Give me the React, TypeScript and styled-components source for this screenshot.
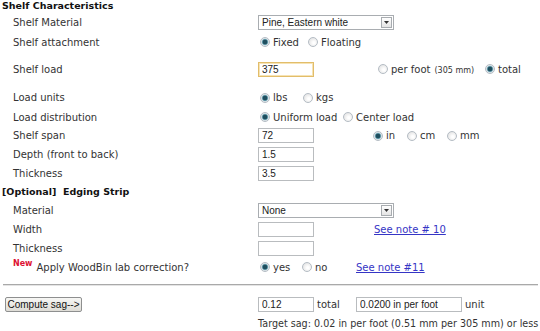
import React from 'react';
import styled, { createGlobalStyle } from 'styled-components';

const GlobalStyle = createGlobalStyle`
  html, body {
    margin: 0;
    padding: 0;
    background: #ffffff;
  }

  body {
    font-family: "DejaVu Sans", Verdana, sans-serif;
    font-size: 10px;
    color: #333333;
  }
`;

const Form = styled.div`
  width: 540px;
  display: flex;
  flex-direction: column;
`;

const Row = styled.div<{ $h: number }>`
  display: flex;
  align-items: center;
  height: ${(p) => p.$h}px;
`;

const SectionTitle = styled.div`
  padding-left: 2px;
  font-weight: bold;
  font-size: 9.5px;
  color: #111111;
  white-space: pre;
`;

const Label = styled.div`
  width: 258px;
  flex: none;
  box-sizing: border-box;
  padding-left: 13px;
  white-space: nowrap;
`;

const ButtonCell = styled.div`
  width: 258px;
  flex: none;
  box-sizing: border-box;
  padding-left: 5px;
  display: flex;
  align-items: center;
`;

const Controls = styled.div`
  display: flex;
  align-items: center;
  flex: 1;
  white-space: nowrap;
`;

const Cell = styled.div<{ $w?: number }>`
  display: flex;
  align-items: center;
  flex: none;
  width: ${(p) => (p.$w ? `${p.$w}px` : 'auto')};
  white-space: nowrap;
`;

const TextInput = styled.input<{ $w?: number; $focus?: boolean }>`
  width: ${(p) => p.$w ?? 56}px;
  height: 15px;
  box-sizing: border-box;
  margin: 0;
  padding: 0 3px;
  border: 1px solid ${(p) => (p.$focus ? '#e2bd6a' : '#b9bcbf')};
  box-shadow: ${(p) => (p.$focus ? 'inset 0 0 0 1px #f6e3b4' : 'none')};
  font-family: "Liberation Sans", Arial, sans-serif;
  font-size: 10px;
  color: #222222;
  background: #ffffff;
  outline: none;
`;

const Select = styled.div`
  width: 136px;
  height: 15px;
  box-sizing: border-box;
  border: 1px solid #a9adb1;
  display: flex;
  align-items: center;
  justify-content: space-between;
  padding-left: 3px;
  font-family: "Liberation Sans", Arial, sans-serif;
  font-size: 10px;
  color: #222222;
  background: #ffffff;
`;

const SelectButton = styled.span`
  width: 11px;
  height: 11px;
  margin-right: 1px;
  box-sizing: border-box;
  border: 1px solid #a8acb0;
  background: linear-gradient(#ffffff, #e4e4e4);
  display: flex;
  align-items: center;
  justify-content: center;
`;

const RadioOption = styled.label`
  display: flex;
  align-items: center;
  gap: 3px;
  padding-left: 2px;
`;

const RadioDot = styled.span<{ $checked?: boolean }>`
  width: 10px;
  height: 10px;
  box-sizing: border-box;
  border-radius: 50%;
  border: 1px solid #b4bcc4;
  background: ${(p) =>
    p.$checked
      ? 'radial-gradient(circle, #1f4e5e 0 2px, #5d97a8 2.6px, #dfe6ea 3.6px, #f3f3f3 100%)'
      : 'radial-gradient(circle at 60% 60%, #ffffff 0 1px, #ececec 4px, #d6d9dc 100%)'};
  flex: none;
`;

const Small = styled.span`
  font-size: 8px;
  margin-left: 4px;
`;

const NoteLink = styled.a`
  color: #3535c5;
  text-decoration: underline;
  cursor: pointer;
`;

const NewTag = styled.sup`
  color: #dd1133;
  font-weight: bold;
  font-size: 8px;
  margin-right: 4px;
  position: relative;
  top: -1px;
`;

const Divider = styled.div`
  flex: 1;
  margin: 0 2px 0 3px;
  border-top: 1px solid #a9a9a9;
  border-bottom: 1px solid #e4e4e4;
`;

const Button = styled.button`
  height: 15px;
  width: 77px;
  padding: 0;
  border: 1px solid #8e8f8f;
  border-radius: 2px;
  background: linear-gradient(#f7f7f5, #dedcd6);
  font-family: "Liberation Sans", Arial, sans-serif;
  font-size: 10px;
  color: #111111;
  line-height: 13px;
`;

const Suffix = styled.span`
  margin-left: 3px;
`;

const TargetText = styled.span`
  font-size: 9.6px;
  white-space: nowrap;
`;

type RadioProps = { label: React.ReactNode; checked?: boolean };

const Radio: React.FC<RadioProps> = ({ label, checked }) => (
  <RadioOption>
    <RadioDot $checked={checked} />
    <span>{label}</span>
  </RadioOption>
);

const Caret = () => (
  <svg width="5" height="3" viewBox="0 0 5 3">
    <path d="M0 0h5L2.5 3z" fill="#333" />
  </svg>
);

export default function App() {
  return (
    <>
      <GlobalStyle />
      <Form>
        <Row $h={11}>
          <SectionTitle>Shelf Characteristics</SectionTitle>
        </Row>

        <Row $h={22}>
          <Label>Shelf Material</Label>
          <Controls>
            <Select>
              <span>Pine, Eastern white</span>
              <SelectButton>
                <Caret />
              </SelectButton>
            </Select>
          </Controls>
        </Row>

        <Row $h={18}>
          <Label>Shelf attachment</Label>
          <Controls>
            <Cell $w={48}>
              <Radio label="Fixed" checked />
            </Cell>
            <Cell>
              <Radio label="Floating" />
            </Cell>
          </Controls>
        </Row>

        <Row $h={36}>
          <Label>Shelf load</Label>
          <Controls>
            <Cell $w={118}>
              <TextInput $focus defaultValue="375" />
            </Cell>
            <Cell $w={107}>
              <Radio
                label={
                  <>
                    per foot<Small>(305 mm)</Small>
                  </>
                }
              />
            </Cell>
            <Cell>
              <Radio label="total" checked />
            </Cell>
          </Controls>
        </Row>

        <Row $h={21}>
          <Label>Load units</Label>
          <Controls>
            <Cell $w={43}>
              <Radio label="lbs" checked />
            </Cell>
            <Cell>
              <Radio label="kgs" />
            </Cell>
          </Controls>
        </Row>

        <Row $h={18}>
          <Label>Load distribution</Label>
          <Controls>
            <Cell $w={83}>
              <Radio label="Uniform load" checked />
            </Cell>
            <Cell>
              <Radio label="Center load" />
            </Cell>
          </Controls>
        </Row>

        <Row $h={19}>
          <Label>Shelf span</Label>
          <Controls>
            <Cell $w={113}>
              <TextInput defaultValue="72" />
            </Cell>
            <Cell $w={34}>
              <Radio label="in" checked />
            </Cell>
            <Cell $w={40}>
              <Radio label="cm" />
            </Cell>
            <Cell>
              <Radio label="mm" />
            </Cell>
          </Controls>
        </Row>

        <Row $h={19}>
          <Label>Depth (front to back)</Label>
          <Controls>
            <TextInput defaultValue="1.5" />
          </Controls>
        </Row>

        <Row $h={19}>
          <Label>Thickness</Label>
          <Controls>
            <TextInput defaultValue="3.5" />
          </Controls>
        </Row>

        <Row $h={17}>
          <SectionTitle>{'[Optional]  Edging Strip'}</SectionTitle>
        </Row>

        <Row $h={20}>
          <Label>Material</Label>
          <Controls>
            <Select>
              <span>None</span>
              <SelectButton>
                <Caret />
              </SelectButton>
            </Select>
          </Controls>
        </Row>

        <Row $h={19}>
          <Label>Width</Label>
          <Controls>
            <Cell $w={116}>
              <TextInput defaultValue="" />
            </Cell>
            <NoteLink>See note # 10</NoteLink>
          </Controls>
        </Row>

        <Row $h={18}>
          <Label>Thickness</Label>
          <Controls>
            <TextInput defaultValue="" />
          </Controls>
        </Row>

        <Row $h={20}>
          <Label>
            <NewTag>New</NewTag>Apply WoodBin lab correction?
          </Label>
          <Controls>
            <Cell $w={42}>
              <Radio label="yes" checked />
            </Cell>
            <Cell $w={56}>
              <Radio label="no" />
            </Cell>
            <NoteLink>See note #11</NoteLink>
          </Controls>
        </Row>

        <Row $h={16}>
          <Divider />
        </Row>

        <Row $h={22}>
          <ButtonCell>
            <Button>Compute sag--&gt;</Button>
          </ButtonCell>
          <Controls>
            <Cell $w={98}>
              <TextInput defaultValue="0.12" />
              <Suffix>total</Suffix>
            </Cell>
            <Cell>
              <TextInput $w={106} defaultValue="0.0200 in per foot" />
              <Suffix>unit</Suffix>
            </Cell>
          </Controls>
        </Row>

        <Row $h={16}>
          <Label />
          <Controls>
            <TargetText>Target sag: 0.02 in per foot (0.51 mm per 305 mm) or less</TargetText>
          </Controls>
        </Row>
      </Form>
    </>
  );
}
